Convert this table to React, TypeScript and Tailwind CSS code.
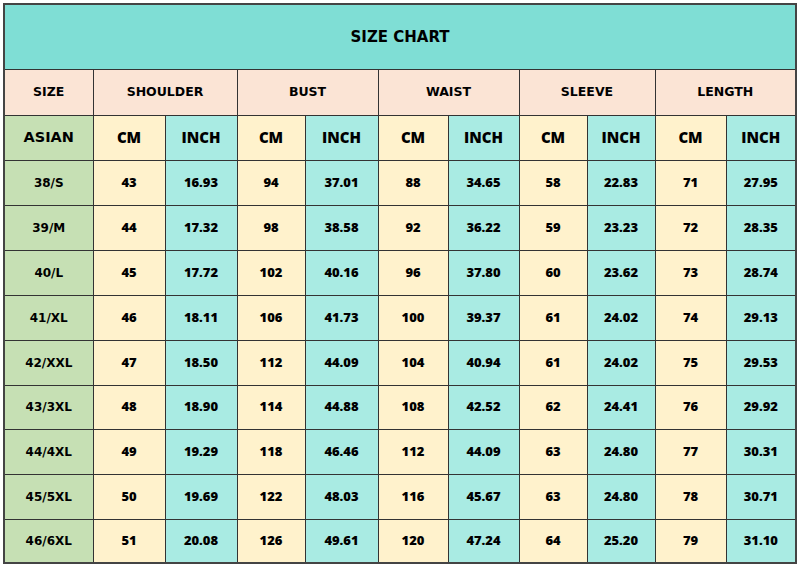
const groups = ['SHOULDER', 'BUST', 'WAIST', 'SLEEVE', 'LENGTH'];

const rows: [string, ...string[]][] = [
  ['38/S', '43', '16.93', '94', '37.01', '88', '34.65', '58', '22.83', '71', '27.95'],
  ['39/M', '44', '17.32', '98', '38.58', '92', '36.22', '59', '23.23', '72', '28.35'],
  ['40/L', '45', '17.72', '102', '40.16', '96', '37.80', '60', '23.62', '73', '28.74'],
  ['41/XL', '46', '18.11', '106', '41.73', '100', '39.37', '61', '24.02', '74', '29.13'],
  ['42/XXL', '47', '18.50', '112', '44.09', '104', '40.94', '61', '24.02', '75', '29.53'],
  ['43/3XL', '48', '18.90', '114', '44.88', '108', '42.52', '62', '24.41', '76', '29.92'],
  ['44/4XL', '49', '19.29', '118', '46.46', '112', '44.09', '63', '24.80', '77', '30.31'],
  ['45/5XL', '50', '19.69', '122', '48.03', '116', '45.67', '63', '24.80', '78', '30.71'],
  ['46/6XL', '51', '20.08', '126', '49.61', '120', '47.24', '64', '25.20', '79', '31.10'],
];

const widths = [89, 72, 72, 68, 73, 70, 71, 68, 68, 71, 70];

const cell = 'border border-[#333] text-center align-middle p-0';
const heavy = "font-['DejaVu_Sans',sans-serif] font-bold";
const soft = "font-['Open_Sans',sans-serif] font-extrabold";

export default function App() {
  return (
    <div className="bg-white w-[800px] h-[567px] pt-[3px] pl-[3px] text-black">
      <table className="border-collapse table-fixed border-2 border-[#444] w-[792px]">
        <colgroup>
          {widths.map((w, i) => (
            <col key={i} style={{ width: w }} />
          ))}
        </colgroup>
        <tbody>
          <tr className="h-[65px]">
            <td colSpan={11} className={`${cell} bg-[#7fded5] ${heavy} text-[15px]`}>
              SIZE CHART
            </td>
          </tr>
          <tr className="h-[46px]">
            <td className={`${cell} bg-[#fbe4d5] ${heavy} text-[12.5px]`}>SIZE</td>
            {groups.map((g) => (
              <td key={g} colSpan={2} className={`${cell} bg-[#fbe4d5] ${heavy} text-[12.5px]`}>
                {g}
              </td>
            ))}
          </tr>
          <tr className="h-[45px]">
            <td className={`${cell} bg-[#c6e0b4] ${heavy} text-[14.5px]`}>ASIAN</td>
            {groups.map((g) => (
              <>
                <td key={g + 'cm'} className={`${cell} bg-[#fff2cc] ${soft} text-[15px]`}>CM</td>
                <td key={g + 'in'} className={`${cell} bg-[#a9ebe3] ${soft} text-[15px]`}>INCH</td>
              </>
            ))}
          </tr>
          {rows.map(([size, ...vals], r) => (
            <tr key={size} className={r === 5 || r === 8 ? 'h-[44px]' : 'h-[45px]'}>
              <td className={`${cell} bg-[#c6e0b4] ${heavy} text-[12px]`}>{size}</td>
              {vals.map((v, i) => (
                <td
                  key={i}
                  className={`${cell} ${i % 2 === 0 ? 'bg-[#fff2cc]' : 'bg-[#a9ebe3]'} ${soft} text-[13px]`}
                >
                  {v}
                </td>
              ))}
            </tr>
          ))}
        </tbody>
      </table>
    </div>
  );
}
